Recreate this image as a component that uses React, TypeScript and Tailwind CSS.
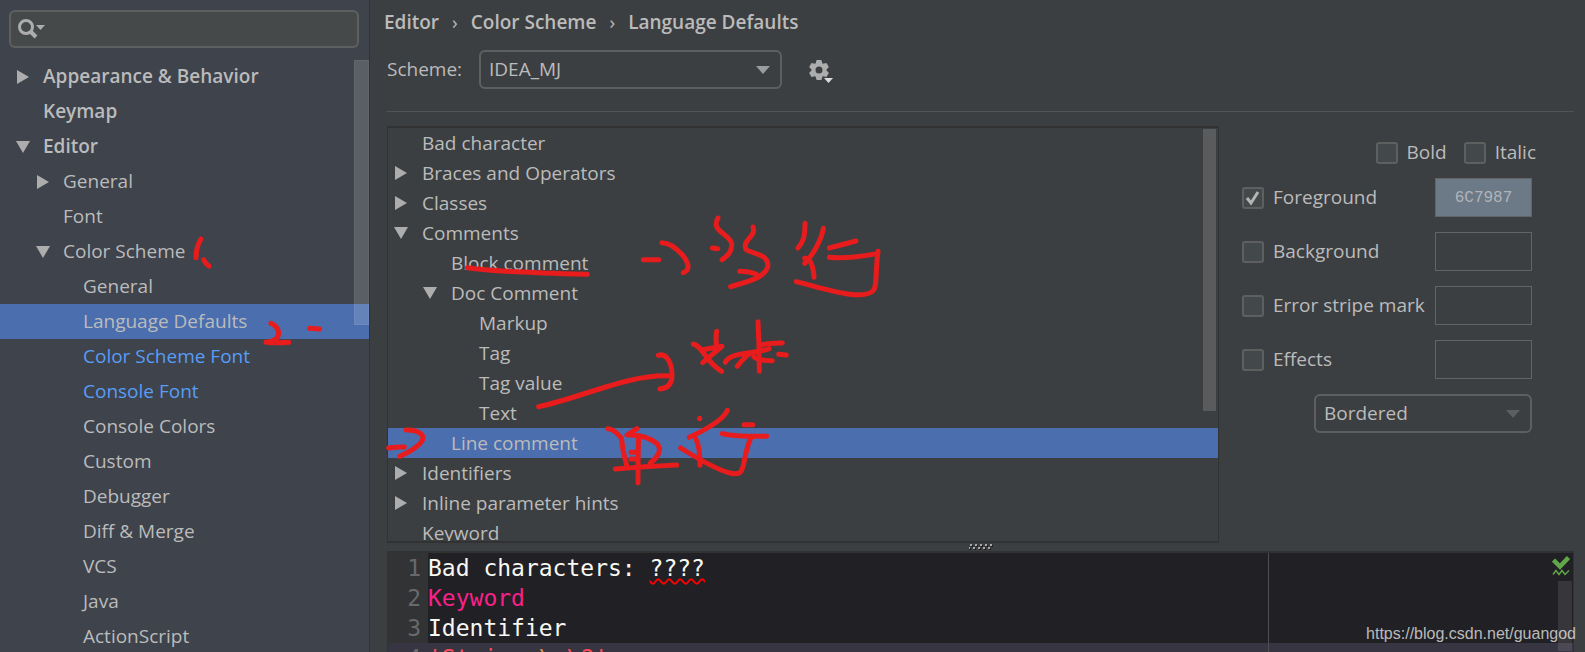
import { useState } from "react";

type Arrow = "open" | "closed" | null;

interface TreeRow {
  label: string;
  level: number;
  arrow: Arrow;
  tone?: "bold" | "link";
  selected?: boolean;
}

const settingsRows: TreeRow[] = [
  { label: "Appearance & Behavior", level: 0, arrow: "closed", tone: "bold" },
  { label: "Keymap", level: 0, arrow: null, tone: "bold" },
  { label: "Editor", level: 0, arrow: "open", tone: "bold" },
  { label: "General", level: 1, arrow: "closed" },
  { label: "Font", level: 1, arrow: null },
  { label: "Color Scheme", level: 1, arrow: "open" },
  { label: "General", level: 2, arrow: null },
  { label: "Language Defaults", level: 2, arrow: null, selected: true },
  { label: "Color Scheme Font", level: 2, arrow: null, tone: "link" },
  { label: "Console Font", level: 2, arrow: null, tone: "link" },
  { label: "Console Colors", level: 2, arrow: null },
  { label: "Custom", level: 2, arrow: null },
  { label: "Debugger", level: 2, arrow: null },
  { label: "Diff & Merge", level: 2, arrow: null },
  { label: "VCS", level: 2, arrow: null },
  { label: "Java", level: 2, arrow: null },
  { label: "ActionScript", level: 2, arrow: null },
];

const attributeRows: TreeRow[] = [
  { label: "Bad character", level: 0, arrow: null },
  { label: "Braces and Operators", level: 0, arrow: "closed" },
  { label: "Classes", level: 0, arrow: "closed" },
  { label: "Comments", level: 0, arrow: "open" },
  { label: "Block comment", level: 1, arrow: null },
  { label: "Doc Comment", level: 1, arrow: "open" },
  { label: "Markup", level: 2, arrow: null },
  { label: "Tag", level: 2, arrow: null },
  { label: "Tag value", level: 2, arrow: null },
  { label: "Text", level: 2, arrow: null },
  { label: "Line comment", level: 1, arrow: null, selected: true },
  { label: "Identifiers", level: 0, arrow: "closed" },
  { label: "Inline parameter hints", level: 0, arrow: "closed" },
  { label: "Keyword", level: 0, arrow: null },
];

const SETTINGS_INDENT = ["pl-4", "pl-9", "pl-14"];
const ATTRIBUTE_INDENT = ["pl-[6px]", "pl-[35px]", "pl-[63px]"];

function toneClass(tone?: TreeRow["tone"]): string {
  if (tone === "bold") return "font-semibold";
  if (tone === "link") return "text-[#589df6]";
  return "";
}

function TreeArrow({ arrow }: { arrow: Arrow }) {
  return (
    <svg className="w-4 h-4 shrink-0 fill-[#adadad]" viewBox="0 0 16 16" aria-hidden="true">
      {arrow === "closed" && <path d="M1 1 L13 8 L1 15 Z" />}
      {arrow === "open" && <path d="M0 2 H14 L7 14 Z" />}
    </svg>
  );
}

function Caret({ className }: { className: string }) {
  return (
    <svg className={className} viewBox="0 0 14 8" aria-hidden="true">
      <path d="M0 0 H14 L7 8 Z" />
    </svg>
  );
}

function SearchBox() {
  return (
    <label className="mr-[10px] ml-[9px] mt-[10px] flex h-[38px] shrink-0 items-center rounded-md border-2 border-[#5e6060] bg-[#45494a] px-[7px]">
      <svg className="h-5 w-7 shrink-0" viewBox="0 0 28 20" aria-hidden="true">
        <circle cx="8" cy="8" r="6.5" fill="none" stroke="#adadad" strokeWidth="3" />
        <path d="M12 12 L18 18" stroke="#adadad" strokeWidth="4" />
        <path d="M18 6 H27 L22.5 11 Z" fill="#adadad" />
      </svg>
      <input type="text" aria-label="Search settings" className="min-w-0 flex-1 bg-transparent pl-1 outline-none" />
    </label>
  );
}

function Sidebar() {
  return (
    <aside className="flex w-[370px] shrink-0 flex-col border-r border-[#323232] bg-[#3e434c]">
      <SearchBox />
      <div className="relative mt-[11px] min-h-0 flex-1 overflow-hidden">
        <ul>
          {settingsRows.map((row, i) => (
            <li
              key={i}
              className={`flex h-[35px] items-center ${SETTINGS_INDENT[row.level]} ${toneClass(row.tone)} ${row.selected ? "bg-[#4b6eaf]" : ""}`}
            >
              <TreeArrow arrow={row.arrow} />
              <span className="pl-[11px] whitespace-nowrap">{row.label}</span>
            </li>
          ))}
        </ul>
        <div className="absolute top-px right-0 h-[265px] w-[15px] border border-white/5 bg-white/15" />
      </div>
    </aside>
  );
}

function Breadcrumb() {
  return (
    <nav className="flex h-11 items-center gap-[13px] font-semibold">
      <a href="#editor">Editor</a>
      <span className="font-normal">›</span>
      <a href="#color-scheme">Color Scheme</a>
      <span className="font-normal">›</span>
      <a href="#language-defaults">Language Defaults</a>
    </nav>
  );
}

function SchemeBar() {
  return (
    <div className="ml-[3px] mt-[6px] flex items-center">
      <label htmlFor="scheme" className="w-[92px]">Scheme:</label>
      <div className="relative w-[303px]">
        <select
          id="scheme"
          className="h-[39px] w-full appearance-none rounded-md border-2 border-[#5e6060] bg-[#3c3f41] px-2 outline-none"
        >
          <option>IDEA_MJ</option>
        </select>
        <Caret className="pointer-events-none absolute top-4 right-3 h-2 w-[14px] fill-[#9a9da0]" />
      </div>
      <button type="button" aria-label="Scheme actions" className="ml-[26px]">
        <svg className="h-7 w-7" viewBox="0 0 28 28" aria-hidden="true">
          <g transform="translate(11 14)" fill="#adadad">
            <circle r="5.5" fill="none" stroke="#adadad" strokeWidth="4" />
            {[0, 60, 120, 180, 240, 300].map((a) => (
              <path key={a} d="M-2.4 -10 H2.4 L3.4 -6.5 H-3.4 Z" transform={`rotate(${a})`} />
            ))}
          </g>
          <path d="M16 22 H25 L20.5 27 Z" fill="#dcdcdc" />
        </svg>
      </button>
    </div>
  );
}

function AttributeTree() {
  return (
    <div className="relative h-[417px] min-w-0 flex-1 overflow-hidden border border-y-2 border-[#323232]">
      <ul>
        {attributeRows.map((row) => (
          <li
            key={row.label}
            className={`flex h-[30px] items-center ${ATTRIBUTE_INDENT[row.level]} ${row.selected ? "bg-[#4b6eaf]" : ""}`}
          >
            <TreeArrow arrow={row.arrow} />
            <span className="pl-3 whitespace-nowrap">{row.label}</span>
          </li>
        ))}
      </ul>
      <div className="absolute top-px right-[2px] h-[282px] w-[13px] bg-[#5a5b5d]" />
    </div>
  );
}

function Check({ label, defaultChecked = false }: { label: string; defaultChecked?: boolean }) {
  const [checked, setChecked] = useState(defaultChecked);

  return (
    <label className="flex items-center gap-[9px] whitespace-nowrap">
      <span className="relative flex h-[22px] w-[22px]">
        <input
          type="checkbox"
          checked={checked}
          onChange={(e) => setChecked(e.target.checked)}
          className="h-full w-full appearance-none rounded-[3px] border-2 border-[#5e6060] bg-[#43494a]"
        />
        {checked && (
          <svg className="pointer-events-none absolute inset-0" viewBox="0 0 22 22" aria-hidden="true">
            <path d="M5 11 L9 16 L16 5" fill="none" stroke="#b4b4b4" strokeWidth="3" />
          </svg>
        )}
      </span>
      {label}
    </label>
  );
}

function ColorRow({ label, value }: { label: string; value?: string }) {
  return (
    <div className="flex h-[39px] items-center justify-between">
      <Check label={label} defaultChecked={Boolean(value)} />
      <button
        type="button"
        aria-label={`${label} color`}
        className={`h-[39px] w-[97px] border border-[#646464] font-['Liberation_Mono',monospace] text-base text-[#b0b4b8] ${value ? "bg-[#6c7987]" : ""}`}
      >
        {value}
      </button>
    </div>
  );
}

function AttributePanel() {
  return (
    <section className="flex w-[355px] shrink-0 flex-col gap-[15px] pt-4 pr-[42px] pl-[23px]">
      <div className="-mr-1 flex h-[21px] items-center justify-end gap-[17px]">
        <Check label="Bold" />
        <Check label="Italic" />
      </div>
      <ColorRow label="Foreground" value="6C7987" />
      <ColorRow label="Background" />
      <ColorRow label="Error stripe mark" />
      <ColorRow label="Effects" />
      <div className="relative w-[218px] self-end">
        <select
          aria-label="Effect type"
          className="h-[39px] w-full appearance-none rounded-md border-2 border-[#5e6060] bg-[#3c3f41] px-2 outline-none"
        >
          <option>Bordered</option>
        </select>
        <Caret className="pointer-events-none absolute top-4 right-3 h-2 w-[14px] fill-[#5c5e60]" />
      </div>
    </section>
  );
}

function Splitter() {
  return (
    <div className="flex h-2 items-center justify-center">
      <svg className="h-2 w-6" viewBox="0 0 24 8" aria-hidden="true">
        {[0, 5, 10, 15, 20].map((x) => (
          <g key={x}>
            <rect x={x + 2} y="2" width="2" height="2" fill="#1f1f1f" />
            <rect x={x} y="5" width="2" height="2" fill="#1f1f1f" />
            <rect x={x + 1} y="1" width="2" height="2" fill="#a8a8a8" />
            <rect x={x - 1} y="4" width="2" height="2" fill="#a8a8a8" />
          </g>
        ))}
      </svg>
    </div>
  );
}

function CodePreview() {
  return (
    <div className="relative min-h-0 flex-1 overflow-hidden border border-t-2 border-b-0 border-[#323232] bg-[#212024] font-['DejaVu_Sans_Mono',monospace] text-[23px] leading-[30px] whitespace-pre text-[#f8f8f2]">
      <ol>
        <li className="flex">
          <span className="w-10 bg-[#313335] pr-[7px] text-right text-[#68696c]">1</span>
          <code className="font-[inherit]">
            Bad characters: <span className="underline decoration-[#ff0000] decoration-wavy decoration-2 underline-offset-2">????</span>
          </code>
        </li>
        <li className="flex">
          <span className="w-10 bg-[#313335] pr-[7px] text-right text-[#68696c]">2</span>
          <code className="font-[inherit] text-[#f92089]">Keyword</code>
        </li>
        <li className="flex">
          <span className="w-10 bg-[#313335] pr-[7px] text-right text-[#68696c]">3</span>
          <code className="font-[inherit]">Identifier</code>
        </li>
        <li className="flex bg-[#373541]">
          <span className="w-10 pr-[7px] text-right text-[#68696c]">4</span>
          <code className="font-[inherit] text-[#ff4a5a]">
            'String <span className="text-[#e08a4a]">\n</span>\?'
          </code>
        </li>
      </ol>
      <div className="absolute inset-y-0 right-[304px] w-px bg-[#4e4e50]" />
      <svg className="absolute top-[3px] right-[3px] h-5 w-[18px]" viewBox="0 0 18 20" aria-hidden="true">
        <path d="M1.5 4 L8 10.500 L16.5 1.5" fill="none" stroke="#62a64a" strokeWidth="4.500" />
        <path d="M1 18.500 L4 14.5 L7 18.500 L10 14.5 L13 18.500 L17 14.5" fill="none" stroke="#62a64a" strokeWidth="1.4" />
      </svg>
      <div className="absolute top-7 right-px h-[70px] w-[14px] bg-white/10" />
    </div>
  );
}

// Hand-drawn pen marks, drawn at three units to the pixel.
function PenMarks() {
  return (
    <svg
      className="pointer-events-none absolute top-0 left-0 h-[652px] w-[1585px]"
      viewBox="0 0 4755 1956"
      fill="none"
      stroke="#e81c1c"
      strokeWidth="15"
      strokeLinecap="round"
      strokeLinejoin="round"
      aria-hidden="true"
    >
      <path d="M603 717 Q588 740 588 773 M611 779 Q616 790 627 798" />
      <path d="M813 970 C842 985 850 1020 798 1027 Q830 1030 866 1027 M929 985 L958 987" />
      <g transform="translate(1140 570)">
        <path d="M262 233 Q350 246 622 253" />
        <path d="M790 209 H836 M846 158 C885 160 940 220 920 242 L910 248" />
        <path d="M1014 84 C990 125 1050 130 1055 162 C1056 185 1045 195 1026 209 M997 174 L1013 176" />
        <path d="M1119 111 C1130 140 1085 150 1098 178 C1115 192 1165 190 1164 228 C1155 265 1100 275 1052 290 M1079 244 Q1105 243 1128 252" />
        <path d="M1275 100 C1275 140 1270 155 1254 174 M1330 115 C1325 150 1295 200 1274 220 M1274 205 Q1298 205 1302 262" />
        <path d="M1348 174 L1428 153 M1348 202 Q1400 208 1494 190 M1494 184 C1486 240 1492 295 1478 303 C1445 333 1340 298 1249 275" />
      </g>
      <g transform="translate(1140 960)">
        <path d="M476 260 C600 235 750 160 872 168 M835 106 C860 98 876 130 876 165 C876 190 865 205 840 207" />
        <path d="M1010 34 Q1006 55 1011 84 M968 89 L1026 79 L968 128 M940 72 C970 80 975 125 1025 154" />
        <path d="M1036 127 C1050 95 1115 105 1167 86 M1115 97 Q1095 108 1072 139" />
        <path d="M1134 5 Q1138 80 1138 154 M1140 76 Q1165 68 1207 69 M1121 110 Q1130 121 1177 122 M1196 103 L1219 105" />
        <path d="M26 384 Q50 380 73 381 M78 330 C120 328 175 355 60 409" />
        <path d="M683 326 Q700 325 724 354 Q728 395 740 436 M771 326 L741 345 Q795 342 830 370 C850 390 830 415 811 429" />
        <path d="M776 350 Q774 400 774 488 M753 397 H774 M753 417 L774 418 M706 447 Q790 440 890 435" />
        <path d="M959 295 L959 296 M1042 271 Q1028 305 928 352 M948 358 Q960 380 960 436 M902 384 C960 420 1010 448 1045 458 C1105 475 1080 430 1112 355" />
        <path d="M1027 341 Q1060 350 1160 349 M1092 314 H1118" />
      </g>
    </svg>
  );
}

export default function App() {
  return (
    <div className="relative flex h-screen overflow-hidden bg-[#3c3f41] font-['Open_Sans',sans-serif] text-[19px] text-[#bbbbbb]">
      <Sidebar />
      <main className="flex min-w-0 flex-1 flex-col pr-[11px] pl-[14px]">
        <Breadcrumb />
        <SchemeBar />
        <hr className="mt-[22px] ml-[3px] border-[#515456]" />
        <div className="mt-[14px] ml-[3px] flex">
          <AttributeTree />
          <AttributePanel />
        </div>
        <div className="ml-[3px] flex min-h-0 flex-1 flex-col">
          <Splitter />
          <CodePreview />
        </div>
      </main>
      <PenMarks />
      <p className="absolute right-[9px] bottom-[9px] font-['Liberation_Sans',sans-serif] text-base leading-[18px] text-white/70">
        https://blog.csdn.net/guangod
      </p>
    </div>
  );
}
